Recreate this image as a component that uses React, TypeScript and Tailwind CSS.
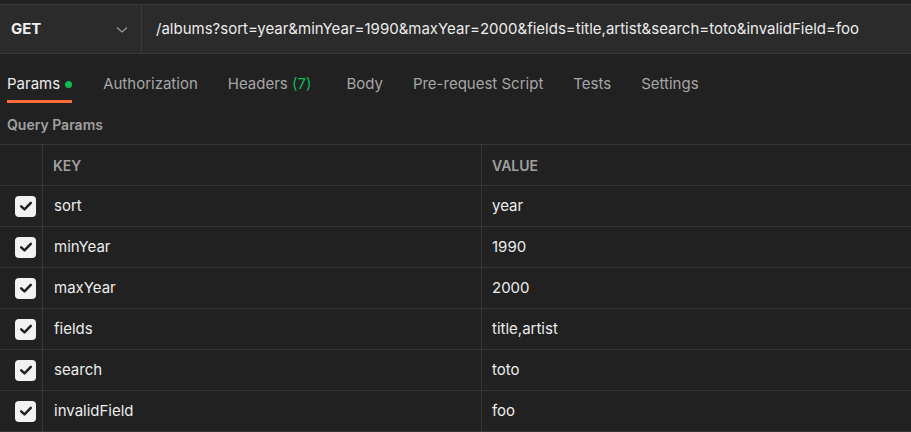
import React from "react";

const rows = [
  ["sort", "year"],
  ["minYear", "1990"],
  ["maxYear", "2000"],
  ["fields", "title,artist"],
  ["search", "toto"],
  ["invalidField", "foo"],
];

const tabs = ["Authorization", "Headers", "Body", "Pre-request Script", "Tests", "Settings"];
const gaps: Record<string, string> = {
  Authorization: "mr-[30px]",
  Headers: "mr-[35px]",
  Body: "mr-[30px]",
  "Pre-request Script": "mr-[30px]",
  Tests: "mr-[30px]",
  Settings: "",
};

function Check() {
  return (
    <div className="w-[21px] h-[21px] rounded-[4px] bg-[#f2f2f2] flex items-center justify-center">
      <svg width="14" height="14" viewBox="0 0 14 14" fill="none">
        <path d="M2.2 7.4 L5.5 10.4 L11.8 3.9" stroke="#212121" strokeWidth="2.5" strokeLinecap="round" strokeLinejoin="round" />
      </svg>
    </div>
  );
}

export default function App() {
  return (
    <div
      className="w-[911px] h-[432px] overflow-hidden bg-[#212121] text-[#e6e6e6]"
      style={{ fontFamily: "Inter, 'Noto Sans', sans-serif" }}
    >
      <div className="h-[4px]" />
      <div className="flex h-[50px] bg-[#2b2b2b] border-y border-[#3a3a3a]">
        <div className="w-[142px] flex items-center justify-between pl-[11px] pr-[13px] pt-[1px] border-r border-[#3a3a3a]">
          <span className="text-[15px] font-bold text-[#f0f0f0]">GET</span>
          <svg width="12" height="8" viewBox="0 0 12 8" fill="none">
            <path d="M1 1.5 L6 6 L11 1.5" stroke="#9a9a9a" strokeWidth="1.3" />
          </svg>
        </div>
        <div className="flex-1 flex items-center pl-[14px] pt-[1px] text-[15px] text-[#ececec] whitespace-nowrap">
          /albums?sort=year&amp;minYear=1990&amp;maxYear=2000&amp;fields=title,artist&amp;search=toto&amp;invalidField=foo
        </div>
      </div>
      <div className="flex items-end h-[49px] pl-[7px] text-[15px] leading-[20px] text-[#a6a6a6]">
        <div className="flex flex-col mr-[31px]">
          <div className="flex items-center gap-[5px] text-[#ededed]">
            Params
            <span className="w-[7px] h-[7px] rounded-full bg-[#0cbb52]" />
          </div>
          <div className="h-[3px] mt-[6px] bg-[#ff6c37]" />
        </div>
        {tabs.map((t) => (
          <div key={t} className={"flex flex-col " + gaps[t]}>
            <div>
              {t}
              {t === "Headers" && <span className="text-[#0cbb52]"> (7)</span>}
            </div>
            <div className="h-[3px] mt-[6px]" />
          </div>
        ))}
      </div>
      <div className="h-[41px] flex items-center pl-[7px] pt-[2px] text-[14px] font-semibold text-[#a0a0a0]">
        Query Params
      </div>
      <div className="border-t border-[#363636]">
        <div className="grid grid-cols-[43px_439px_1fr] h-[41px] border-b border-[#363636]">
          <div className="border-r border-[#363636]" />
          <div className="border-r border-[#363636] flex items-center pl-[10px] text-[14px] font-semibold text-[#a0a0a0]">KEY</div>
          <div className="flex items-center pl-[10px] text-[14px] font-semibold text-[#a0a0a0]">VALUE</div>
        </div>
        {rows.map(([k, v]) => (
          <div key={k} className="grid grid-cols-[43px_439px_1fr] h-[41px] border-b border-[#363636]">
            <div className="border-r border-[#363636] flex items-center pl-[15px]">
              <Check />
            </div>
            <div className="border-r border-[#363636] flex items-center pl-[11px] text-[15px] text-[#ececec]">{k}</div>
            <div className="flex items-center pl-[10px] text-[15px] text-[#ececec]">{v}</div>
          </div>
        ))}
      </div>
    </div>
  );
}
